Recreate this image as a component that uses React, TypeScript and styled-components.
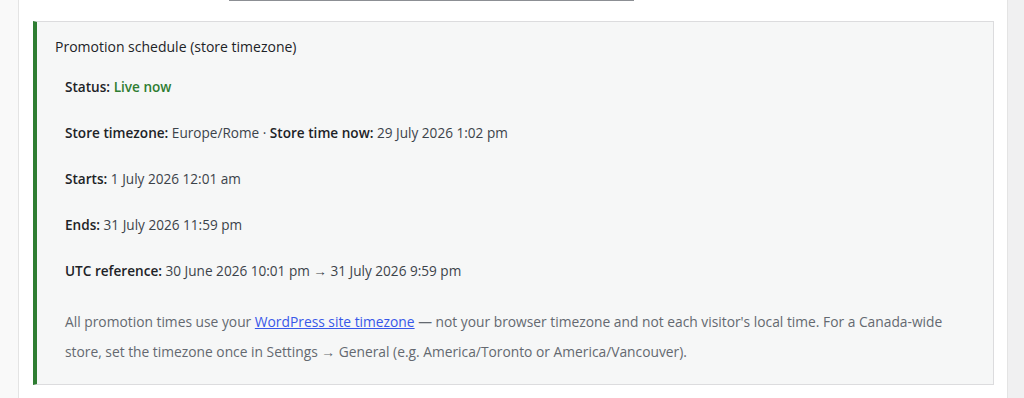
import React from "react";
import styled, { createGlobalStyle } from "styled-components";

const GlobalStyle = createGlobalStyle`
  html, body { margin: 0; padding: 0; background: #fff; }
  body {
    font-family: "Open Sans", "Noto Sans", "Liberation Sans", sans-serif;
    font-size: 13.6px;
    color: #3c434a;
  }
`;

const PAGE = styled.div`
  display: grid;
  grid-template-columns: 19px 1fr 17px;
  height: 398px;
  overflow: hidden;
`;
PAGE.displayName = "PAGE";

const SIDE = styled.div<{ side: "left" | "right" }>`
  background-color: ${p => (p.side === "left" ? "#f9f9f9" : "#f0f0f1")};
  border-${p => (p.side === "left" ? "right" : "left")}: 1px solid #e4e4e4;
`;
SIDE.displayName = "SIDE";

const MAIN = styled.div`
  background: #fff;
  padding: 0 13px 0 14px;
`;
MAIN.displayName = "MAIN";

const FIELD_EDGE = styled.div`
  height: 1px;
  width: 405px;
  margin-left: 196px;
  background-color: #8c8f94;
`;
FIELD_EDGE.displayName = "FIELD_EDGE";

const SCHEDULE_BOX = styled.div`
  margin-top: 20px;
  background-color: #f6f7f7;
  border: 1px solid #dcdcde;
  border-left: 4px solid #2e7d32;
  padding: 15px 18px 17px 18px;
`;
SCHEDULE_BOX.displayName = "SCHEDULE_BOX";

const TITLE = styled.div`
  font-size: 14px;
  line-height: 20px;
  font-weight: 500;
  color: #1d2327;
  margin-bottom: 20px;
`;
TITLE.displayName = "TITLE";

const ROWS = styled.div`
  padding-left: 10px;
  display: flex;
  flex-direction: column;
  gap: 26px;
`;
ROWS.displayName = "ROWS";

const ROW = styled.div`
  line-height: 20px;
  color: #3c434a;
  b {
    font-weight: 600;
    color: #1d2327;
  }
`;
ROW.displayName = "ROW";

const LIVE = styled.span`
  color: #2e7d32;
  font-weight: 600;
`;
LIVE.displayName = "LIVE";

const NOTE = styled.p`
  margin: 0;
  max-width: 880px;
  font-size: 13.8px;
  line-height: 30px;
  color: #646970;
  a {
    color: #3858e9;
    text-decoration: underline;
  }
`;
NOTE.displayName = "NOTE";

export default function App() {
  return (
    <>
      <GlobalStyle />
      <PAGE>
        <SIDE side="left" />
        <MAIN>
          <FIELD_EDGE />
          <SCHEDULE_BOX>
            <TITLE>Promotion schedule (store timezone)</TITLE>
            <ROWS>
              <ROW>
                <b>Status:</b> <LIVE>Live now</LIVE>
              </ROW>
              <ROW>
                <b>Store timezone:</b> Europe/Rome · <b>Store time now:</b> 29 July 2026 1:02 pm
              </ROW>
              <ROW>
                <b>Starts:</b> 1 July 2026 12:01 am
              </ROW>
              <ROW>
                <b>Ends:</b> 31 July 2026 11:59 pm
              </ROW>
              <ROW>
                <b>UTC reference:</b> 30 June 2026 10:01 pm → 31 July 2026 9:59 pm
              </ROW>
              <NOTE>
                All promotion times use your <a href="#">WordPress site timezone</a> — not your
                browser timezone and not each visitor's local time. For a Canada-wide store, set
                the timezone once in Settings → General (e.g. America/Toronto or
                America/Vancouver).
              </NOTE>
            </ROWS>
          </SCHEDULE_BOX>
        </MAIN>
        <SIDE side="right" />
      </PAGE>
    </>
  );
}
